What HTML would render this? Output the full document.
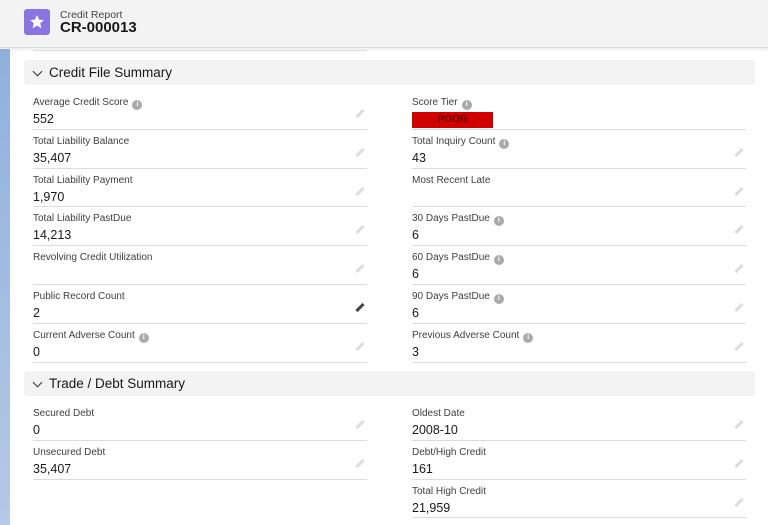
<!DOCTYPE html><html><head><style>
*{margin:0;padding:0;box-sizing:border-box}
body{width:768px;height:525px;overflow:hidden;background:#fff;font-family:"Liberation Sans",sans-serif;position:relative;color:#181818}
.hdr{position:absolute;left:0;top:0;width:768px;height:48px;background:#f3f3f3;border-bottom:1px solid #dcdcdc;box-shadow:0 2px 3px rgba(0,0,0,.08)}
.ico{position:absolute;left:24px;top:9px;width:26px;height:26px;background:#8a75e0;border-radius:3px}
.strip{position:absolute;left:0;top:49px;width:10px;height:476px;background:linear-gradient(#8fb0dc,#b6c9e6)}
.sec{position:absolute;left:24px;width:731px;height:25px;background:#f3f3f3;border-radius:3px;font-size:13.5px;line-height:25px;padding-left:25px}
.sec:before{content:"";position:absolute;left:10px;top:8px;width:6px;height:6px;border-right:1.6px solid #333;border-bottom:1.6px solid #333;transform:rotate(45deg)}
.f{position:absolute;width:334px;height:38.8px;border-bottom:1px solid #dddbda}
.l{position:absolute;left:0;top:6px;font-size:10px;color:#3e3e3c;white-space:nowrap}
.v{position:absolute;left:0;top:21px;font-size:12.5px;color:#181818}
.i{display:inline-block;width:10px;height:10px;border-radius:50%;background:#aaa;color:#fff;font-size:7px;line-height:10px;text-align:center;font-weight:bold;margin-left:4px;vertical-align:-1px}
.p{position:absolute;right:2px;top:21px;width:10px;height:3px;background:#ddd;transform:rotate(-45deg)}
.p.d{background:#444}
.poor{position:absolute;left:0;top:21px;width:81px;height:16px;background:#d00000;color:#6a0000;font-size:10px;font-weight:bold;text-align:center;line-height:16px}
</style></head><body>
<div class="hdr"><div class="ico"><svg width="26" height="26" viewBox="0 0 26 26"><path d="M13 6l2 4.6 5 .4-3.8 3.3 1.2 4.9L13 16.6 8.6 19.2l1.2-4.9L6 11l5-.4z" fill="#fff"/></svg></div>
<div style="position:absolute;left:60px;top:9px;font-size:10.5px;color:#444">Credit Report</div>
<div style="position:absolute;left:60px;top:19px;font-size:15px;font-weight:bold">CR-000013</div></div>
<div class="strip"></div>
<div style="position:absolute;left:33px;top:50px;width:334px;height:1px;background:#ddd"></div>
<div class="sec" style="top:60px">Credit File Summary</div>
<div class="sec" style="top:371px">Trade / Debt Summary</div>

<div class="f" style="left:33px;top:91px"><div class="l">Average Credit Score<span class="i">i</span></div><div class="v">552</div><div class="p"></div></div>
<div class="f" style="left:33px;top:129.8px"><div class="l">Total Liability Balance</div><div class="v">35,407</div><div class="p"></div></div>
<div class="f" style="left:33px;top:168.6px"><div class="l">Total Liability Payment</div><div class="v">1,970</div><div class="p"></div></div>
<div class="f" style="left:33px;top:207.4px"><div class="l">Total Liability PastDue</div><div class="v">14,213</div><div class="p"></div></div>
<div class="f" style="left:33px;top:246.2px"><div class="l">Revolving Credit Utilization</div><div class="v"></div><div class="p"></div></div>
<div class="f" style="left:33px;top:285px"><div class="l">Public Record Count</div><div class="v">2</div><div class="p d"></div></div>
<div class="f" style="left:33px;top:323.8px"><div class="l">Current Adverse Count<span class="i">i</span></div><div class="v">0</div><div class="p"></div></div>

<div class="f" style="left:412px;top:91px"><div class="l">Score Tier<span class="i">i</span></div><div class="poor">POOR</div></div>
<div class="f" style="left:412px;top:129.8px"><div class="l">Total Inquiry Count<span class="i">i</span></div><div class="v">43</div><div class="p"></div></div>
<div class="f" style="left:412px;top:168.6px"><div class="l">Most Recent Late</div><div class="v"></div><div class="p"></div></div>
<div class="f" style="left:412px;top:207.4px"><div class="l">30 Days PastDue<span class="i">i</span></div><div class="v">6</div><div class="p"></div></div>
<div class="f" style="left:412px;top:246.2px"><div class="l">60 Days PastDue<span class="i">i</span></div><div class="v">6</div><div class="p"></div></div>
<div class="f" style="left:412px;top:285px"><div class="l">90 Days PastDue<span class="i">i</span></div><div class="v">6</div><div class="p"></div></div>
<div class="f" style="left:412px;top:323.8px"><div class="l">Previous Adverse Count<span class="i">i</span></div><div class="v">3</div><div class="p"></div></div>

<div class="f" style="left:33px;top:402px"><div class="l">Secured Debt</div><div class="v">0</div><div class="p"></div></div>
<div class="f" style="left:33px;top:440.8px"><div class="l">Unsecured Debt</div><div class="v">35,407</div><div class="p"></div></div>
<div class="f" style="left:412px;top:402px"><div class="l">Oldest Date</div><div class="v">2008-10</div><div class="p"></div></div>
<div class="f" style="left:412px;top:440.8px"><div class="l">Debt/High Credit</div><div class="v">161</div><div class="p"></div></div>
<div class="f" style="left:412px;top:479.6px"><div class="l">Total High Credit</div><div class="v">21,959</div><div class="p"></div></div>
</body></html>
